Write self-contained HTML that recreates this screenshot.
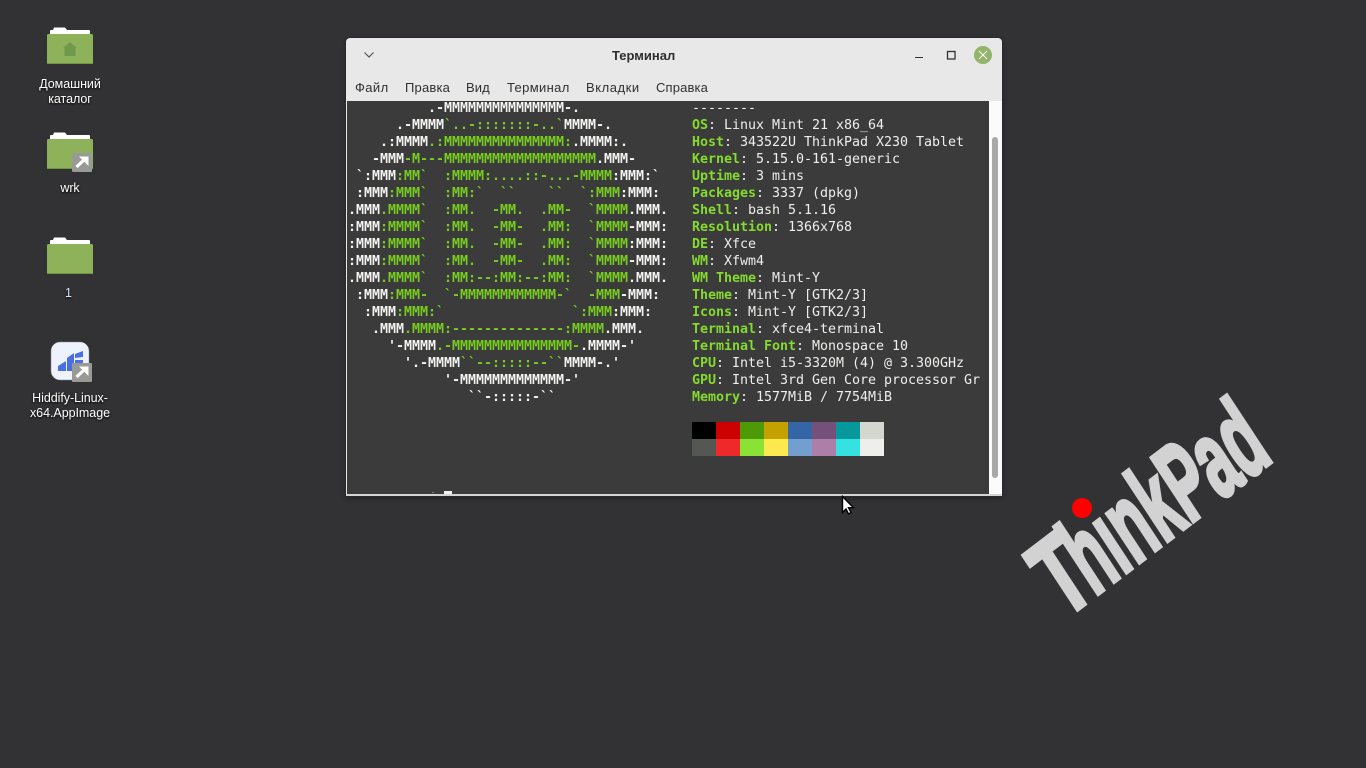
<!DOCTYPE html>
<html lang="ru"><head><meta charset="utf-8"><title>Терминал</title>
<style>
html,body{margin:0;padding:0;width:1366px;height:768px;overflow:hidden;background:#323234}
body{position:relative;font-family:"Liberation Sans",sans-serif}
.abs{position:absolute}
.lbl{position:absolute;left:10px;width:120px;text-align:center;color:#fff;font-size:12.5px;line-height:15px;letter-spacing:-.05px;text-shadow:0 1px 2px #000}
#win{position:absolute;left:346px;top:38px;width:656px;height:458px;background:#e8e8e8;border-radius:4px 4px 0 0;box-shadow:0 0 0 1px #2a2a2a,0 2px 6px rgba(0,0,0,.4)}
#title{position:absolute;left:266px;top:10px;font-size:13px;font-weight:bold;color:#2e2e2e;line-height:16px}
.m{position:absolute;top:42px;font-size:13px;line-height:16px;color:#303030}
#term{position:absolute;left:1px;top:63px;width:642px;height:393px;background:#3b3b3b;overflow:hidden}
#sb{position:absolute;left:643px;top:63px;width:13px;height:393px;background:#fbfbfb}
#th{position:absolute;left:3px;top:36px;width:6px;height:341px;background:#a9a9a9;border-radius:3px}
pre{position:absolute;margin:0;top:-1px;font-family:"DejaVu Sans Mono",monospace;font-size:13.33px;line-height:17px;letter-spacing:-.025px;white-space:pre}
#art{left:1px;color:#f2f2f0;font-weight:bold}
#art i{font-style:normal;color:#77cc22}
#info{left:345px;color:#eeeeec}
#info b{color:#84da2e}
.c{position:absolute;width:24px;height:17px}
#bottom{position:absolute;left:0;top:456px;width:656px;height:2px;background:#d4d4d4}
</style></head><body>

<!-- wallpaper logo -->
<svg class="abs" style="left:1000px;top:380px" width="290" height="250" viewBox="0 0 290 250">
<g transform="translate(78 232) rotate(-37.3) skewX(-4)" font-family="Liberation Sans" font-weight="bold" font-size="110" fill="#d2d2d2" stroke="#d2d2d2" stroke-width="4.500">
<text transform="translate(-16 0) scale(.64 1)" x="0" y="-2.250">T</text>
<text transform="translate(22 0) scale(.53 1)" x="0" y="-2.250">hinkPad</text>
<rect x="57.500" y="-97" width="16" height="33" fill="#323234" stroke="none"/>
</g>
<circle cx="82" cy="128" r="10" fill="#ff0000"/>
</svg>

<!-- desktop icons -->
<svg class="abs" style="left:40px;top:20px" width="60" height="50" viewBox="0 0 60 50">
<path d="M10 14V11q0-1 1-1h2l1-2.500h11l2 2.500h22q1 0 1 1v3z" fill="#fff"/>
<rect x="7" y="14" width="46" height="30" rx="1.500" fill="#8db25a"/>
<rect x="7" y="43" width="46" height="1" fill="#6e9544"/>
<path d="M30 22L37 28H35.500V36H24.500V28H23Z" fill="#6f9a4b"/>
</svg>
<div class="lbl" style="top:77px">Домашний<br>каталог</div>

<svg class="abs" style="left:40px;top:125px" width="60" height="50" viewBox="0 0 60 50">
<path d="M10 14V11q0-1 1-1h2l1-2.500h11l2 2.500h22q1 0 1 1v3z" fill="#fff"/>
<rect x="7" y="14" width="46" height="30" rx="1.500" fill="#8db25a"/>
<rect x="7" y="43" width="46" height="1" fill="#6e9544"/>
<rect x="32" y="28" width="20" height="19" rx="1" fill="#999996"/>
<path d="M36.500 42L45 34" stroke="#fff" stroke-width="3.200" fill="none"/>
<path d="M39 31.500h9.500v9.500z" fill="#fff"/>
</svg>
<div class="lbl" style="top:181px">wrk</div>

<svg class="abs" style="left:40px;top:230px" width="60" height="50" viewBox="0 0 60 50">
<path d="M10 14V11q0-1 1-1h2l1-2.500h11l2 2.500h22q1 0 1 1v3z" fill="#fff"/>
<rect x="7" y="14" width="46" height="30" rx="1.500" fill="#8db25a"/>
<rect x="7" y="43" width="46" height="1" fill="#6e9544"/>
</svg>
<div class="lbl" style="top:286px;left:8.500px;color:#cfe6ff">1</div>

<svg class="abs" style="left:45px;top:338px" width="52" height="48" viewBox="0 0 52 48">
<rect x="6" y="4" width="38" height="38" rx="9" fill="#eef2fd" stroke="#8a8a90" stroke-width=".5"/>
<path d="M13 33V28L21 23V33ZM22 33V20L29 15V33ZM30 20V16L38 13V19ZM30 22h8v8h-8z" fill="#4a6fe3"/>
<rect x="27" y="25" width="20" height="19" rx="1" fill="#999996"/>
<path d="M31.500 39L40 31" stroke="#fff" stroke-width="3.200" fill="none"/>
<path d="M34 28.500h9.500v9.500z" fill="#fff"/>
</svg>
<div class="lbl" style="top:391px">Hiddify-Linux-<br>x64.AppImage</div>

<!-- terminal window -->
<div id="win">
<svg class="abs" style="left:17px;top:13px" width="12" height="8" viewBox="0 0 12 8"><path d="M1.500 1.500L6 6l4.500-4.500" stroke="#555" stroke-width="1.200" fill="none"/></svg>
<div id="title">Терминал</div>
<svg class="abs" style="left:560px;top:5px" width="90" height="26" viewBox="0 0 90 26">
<rect x="9" y="14" width="8" height="1" fill="#333"/>
<rect x="41.500" y="8.500" width="7.500" height="7.500" fill="none" stroke="#333" stroke-width="1.300"/>
<circle cx="77" cy="12" r="9" fill="#93b56a"/>
<path d="M73 8l8 8M81 8l-8 8" stroke="#fff" stroke-width="1"/>
</svg>
<div class="m" style="left:9px;letter-spacing:.4px">Файл</div>
<div class="m" style="left:59px;letter-spacing:.2px">Правка</div>
<div class="m" style="left:120px;letter-spacing:.1px">Вид</div>
<div class="m" style="left:161px;letter-spacing:.35px">Терминал</div>
<div class="m" style="left:240px;letter-spacing:.55px">Вкладки</div>
<div class="m" style="left:310px;letter-spacing:.15px">Справка</div>

<div id="term">
<pre id="art">          .-MMMMMMMMMMMMMMM-.
      .-MMMM<i>`..-:::::::-..`</i>MMMM-.
    .:MMMM<i>.:MMMMMMMMMMMMMMM:</i>.MMMM:.
   -MMM<i>-M---MMMMMMMMMMMMMMMMMMM</i>.MMM-
 `:MMM<i>:MM`  :MMMM:....::-...-MMMM</i>:MMM:`
 :MMM<i>:MMM`  :MM:`  ``    ``  `:MMM</i>:MMM:
.MMM<i>.MMMM`  :MM.  -MM.  .MM-  `MMMM</i>.MMM.
:MMM<i>:MMMM`  :MM.  -MM-  .MM:  `MMMM</i>-MMM:
:MMM<i>:MMMM`  :MM.  -MM-  .MM:  `MMMM</i>:MMM:
:MMM<i>:MMMM`  :MM.  -MM-  .MM:  `MMMM</i>-MMM:
.MMM<i>.MMMM`  :MM:--:MM:--:MM:  `MMMM</i>.MMM.
 :MMM<i>:MMM-  `-MMMMMMMMMMMM-`  -MMM</i>-MMM:
  :MMM<i>:MMM:`                `:MMM</i>:MMM:
   .MMM<i>.MMMM:--------------:MMMM</i>.MMM.
     '-MMMM<i>.-MMMMMMMMMMMMMMM-</i>.MMMM-'
       '.-MMMM<i>``--:::::--``</i>MMMM-.'
            '-MMMMMMMMMMMMM-'
               ``-:::::-``</pre>
<pre id="info">--------
<b>OS</b>: Linux Mint 21 x86_64
<b>Host</b>: 343522U ThinkPad X230 Tablet
<b>Kernel</b>: 5.15.0-161-generic
<b>Uptime</b>: 3 mins
<b>Packages</b>: 3337 (dpkg)
<b>Shell</b>: bash 5.1.16
<b>Resolution</b>: 1366x768
<b>DE</b>: Xfce
<b>WM</b>: Xfwm4
<b>WM Theme</b>: Mint-Y
<b>Theme</b>: Mint-Y [GTK2/3]
<b>Icons</b>: Mint-Y [GTK2/3]
<b>Terminal</b>: xfce4-terminal
<b>Terminal Font</b>: Monospace 10
<b>CPU</b>: Intel i5-3320M (4) @ 3.300GHz
<b>GPU</b>: Intel 3rd Gen Core processor Gr
<b>Memory</b>: 1577MiB / 7754MiB</pre>
<div class="c" style="left:345px;top:321px;background:#000000"></div>
<div class="c" style="left:369px;top:321px;background:#cc0000"></div>
<div class="c" style="left:393px;top:321px;background:#4e9a06"></div>
<div class="c" style="left:417px;top:321px;background:#c4a000"></div>
<div class="c" style="left:441px;top:321px;background:#3465a4"></div>
<div class="c" style="left:465px;top:321px;background:#75507b"></div>
<div class="c" style="left:489px;top:321px;background:#06989a"></div>
<div class="c" style="left:513px;top:321px;background:#d3d7cf"></div>
<div class="c" style="left:345px;top:338px;background:#555753"></div>
<div class="c" style="left:369px;top:338px;background:#ef2929"></div>
<div class="c" style="left:393px;top:338px;background:#8ae234"></div>
<div class="c" style="left:417px;top:338px;background:#fce94f"></div>
<div class="c" style="left:441px;top:338px;background:#729fcf"></div>
<div class="c" style="left:465px;top:338px;background:#ad7fa8"></div>
<div class="c" style="left:489px;top:338px;background:#34e2e2"></div>
<div class="c" style="left:513px;top:338px;background:#eeeeec"></div>
<div class="abs" style="left:97px;top:390px;width:8px;height:3px;background:#f2f2f2"></div>
<div class="abs" style="left:85px;top:391px;width:2px;height:1px;background:#8a8a50"></div>
</div>
<div id="sb"><div id="th"></div></div>
<div id="bottom"></div>
</div>

<!-- cursor -->
<svg class="abs" style="left:838px;top:492px" width="20" height="26" viewBox="0 0 20 26">
<path d="M4.500 4.500v16l3.500-3.500 2.500 5 2.500-1.500-2.500-4.800h5z" fill="#fff" stroke="#000" stroke-width="1.400"/>
</svg>
</body></html>
